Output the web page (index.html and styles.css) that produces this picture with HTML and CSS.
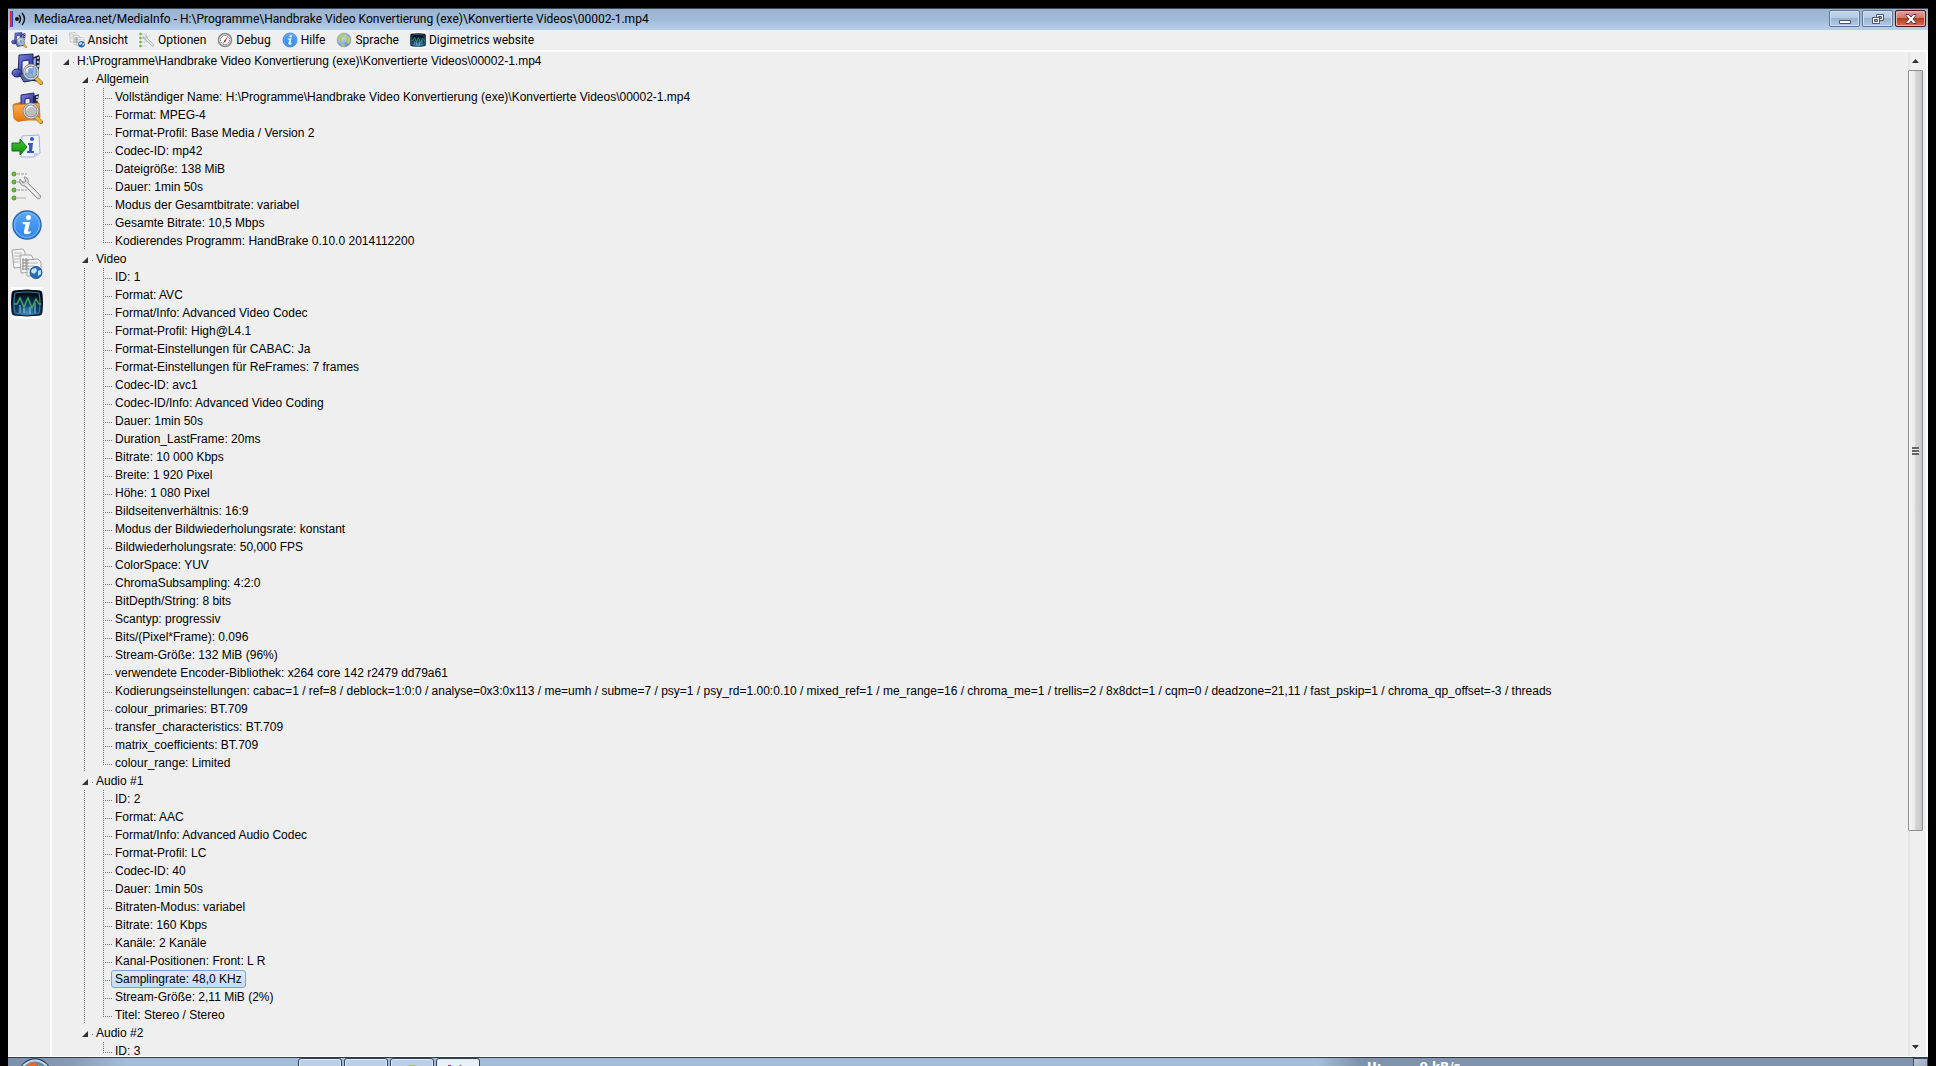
FILE: index.html
```
<!DOCTYPE html>
<html lang="de">
<head>
    <meta charset="UTF-8">
    <meta name="viewport" content="width=device-width, initial-scale=1.0">
    <title>MediaArea.net/MediaInfo</title>
    <link rel="stylesheet" href="styles.css">
</head>
<body>
    <!-- Icons -->
    <svg class="sprite" aria-hidden="true">
        <defs>
            <linearGradient id="g-note" x1="0" y1="0" x2="1" y2="1">
                <stop offset="0" stop-color="#7f86e0"/>
                <stop offset="1" stop-color="#22288f"/>
            </linearGradient>
            <linearGradient id="g-folder" x1="0" y1="0" x2="0" y2="1">
                <stop offset="0" stop-color="#f9b25a"/>
                <stop offset="1" stop-color="#e87a12"/>
            </linearGradient>
            <linearGradient id="g-info" x1="0" y1="0" x2="0" y2="1">
                <stop offset="0" stop-color="#5aa6f5"/>
                <stop offset="1" stop-color="#2f86ee"/>
            </linearGradient>
            <linearGradient id="g-arrow" x1="0" y1="0" x2="0" y2="1">
                <stop offset="0" stop-color="#46c832"/>
                <stop offset="1" stop-color="#0e8a10"/>
            </linearGradient>
            <radialGradient id="g-scope" cx="0.5" cy="0.9" r="0.8">
                <stop offset="0" stop-color="#4a96c4"/>
                <stop offset="0.45" stop-color="#123e63"/>
                <stop offset="1" stop-color="#04080f"/>
            </radialGradient>
            <radialGradient id="g-globe" cx="0.35" cy="0.3" r="0.8">
                <stop offset="0" stop-color="#d4e6fa"/>
                <stop offset="1" stop-color="#5a82bd"/>
            </radialGradient>
        </defs>
        <symbol id="lens" viewBox="0 0 32 32">
            <path d="M25 25l5 5" stroke="#9a7a30" stroke-width="4" stroke-linecap="round"/>
            <path d="M25.500 25.500l4 4" stroke="#f0b63c" stroke-width="3" stroke-linecap="round"/>
            <circle cx="20" cy="19" r="7" fill="#a9cdf2" fill-opacity="0.7" stroke="#83898f" stroke-width="2.400"/>
            <circle cx="20" cy="19" r="7" fill="none" stroke="#dfe4e8" stroke-width="1"/>
            <path d="M15.500 18a5 5 0 0 1 6-3.500" fill="none" stroke="#fff" stroke-width="1.400"/>
        </symbol>
        <symbol id="note" viewBox="0 0 32 32">
            <path d="M20 5l8-3 1 3-2 21 2 3-7-1-3-3z" fill="#1c2740"/>
            <path d="M21 6l4-1-1 20-4-1z" fill="#92b4dc"/>
            <path d="M26 5h2M26 9h2M26 13h2M25 17h2M25 21h2" stroke="#e8eef6" stroke-width="1.500"/>
            <path d="M8 2l14-1v19h-4V7l-7 1v12H7z" fill="url(#g-note)" stroke="#20246e" stroke-width="1"/>
            <ellipse cx="6" cy="20" rx="5" ry="4" fill="url(#g-note)" stroke="#20246e"/>
            <path d="M8 21l13-1 3 7-11 2z" fill="#4a6aa8" stroke="#18233f"/>
        </symbol>
        <symbol id="file" viewBox="0 0 32 32">
            <use href="#note"/>
            <use href="#lens"/>
        </symbol>
        <symbol id="folder" viewBox="0 0 32 32">
            <path d="M2 12l7-2 3 2 15-2 2 16-22 4-4-3z" fill="#d97414"/>
            <path d="M10 3l13-2v15h-4V6l-5 1v10h-4z" fill="url(#g-note)" stroke="#20246e"/>
            <path d="M22 4l6-2-2 12h-4z" fill="#1c2740"/>
            <path d="M25 5h2M25 8h2" stroke="#e8eef6" stroke-width="1.500"/>
            <path d="M2 13l26-2 1 14-3 3H6l-3-2z" fill="url(#g-folder)" stroke="#d87a1c"/>
            <use href="#lens"/>
        </symbol>
        <symbol id="export" viewBox="0 0 32 32">
            <path d="M11 5l17-1 1 18-6 4H10z" fill="#eef3ff" stroke="#a6b3d4"/>
            <path d="M23 26v-4h6z" fill="#c3cfea"/>
            <circle cx="21" cy="8" r="2" fill="#3b55c4"/>
            <path d="M17 12h5l-1 8h2v2h-7v-2h2v-6h-1z" fill="#3b55c4"/>
            <path d="M1 12h8V8l7 8-7 8v-4H1z" fill="url(#g-arrow)" stroke="#0d7410"/>
        </symbol>
        <symbol id="options" viewBox="0 0 32 32">
            <path d="M6 4h10M6 12h10M6 20h10" stroke="#c3c3c3" stroke-width="2" stroke-dasharray="3 1"/>
            <g fill="#6cc43a" stroke="#479a20">
                <circle cx="3" cy="4" r="2"/>
                <circle cx="3" cy="12" r="2"/>
                <circle cx="3" cy="20" r="2"/>
                <circle cx="3" cy="28" r="2"/>
            </g>
            <path d="M6 28h9" stroke="#d0d0d0" stroke-width="2"/>
            <path d="M9 9c-1 4 1 7 5 7l12 12c2 2 5 0 3-3L17 13c1-3-1-6-4-6l2 4-3 2z" fill="#dadada" stroke="#8e8e8e"/>
            <path d="M15 14l12 12" stroke="#f8f8f8" stroke-width="1.500"/>
        </symbol>
        <symbol id="info" viewBox="0 0 32 32">
            <circle cx="16" cy="16" r="14" fill="url(#g-info)" stroke="#2a68b4" stroke-width="1.400"/>
            <circle cx="16" cy="16" r="12.500" fill="none" stroke="#83bcf8"/>
            <circle cx="17.500" cy="8.500" r="2.500" fill="#fff"/>
            <path d="M12 13h7l-2 9c0 1 1 1 3 0l-.5 2c-3 2-7.500 2-6.500-2l1.500-6.500-3-.5z" fill="#fff"/>
        </symbol>
        <symbol id="view" viewBox="0 0 32 32">
            <g fill="#f5f5f5" stroke="#a2a2a2">
                <path d="M1 2l11-1 2 3v15l-11 1z"/>
                <path d="M9 7l11 0 2 3v14l-12 1z"/>
                <path d="M16 12l11-1 3 3v14l-14 0z"/>
            </g>
            <path d="M3 5h8M3 8h8M3 11h5M3 14h5" stroke="#b4b4b4"/>
            <path d="M12 10v12M15 10v12M11 12h7M11 15h7M11 18h7M11 21h7" stroke="#8e8e8e"/>
            <path d="M18 15h9M18 18h5M18 21h3" stroke="#b4b4b4"/>
            <circle cx="25" cy="24.500" r="6" fill="#2a6db8" stroke="#1c4f90"/>
            <path d="M21 21l4-1 1 3-3 3-3-2zM27 23l3-1v4l-3 2z" fill="#c6e2fa"/>
        </symbol>
        <symbol id="scope" viewBox="0 0 32 32">
            <path d="M0 0h32v32H0z" fill="#fff"/>
            <path d="M3 4q13-2 26 0 2 0 2 3 1 9 0 18 0 3-2 3-13 2-26 0-2 0-2-3-1-9 0-18 0-3 2-3z" fill="url(#g-scope)" stroke="#061019"/>
            <path d="M4 6q12-2 24 0 2 10 0 20-12 2-24 0-2-10 0-20z" fill="none" stroke="#2d7fb0" stroke-width="1.200"/>
            <path d="M9 18v8M13 21v5M19 20v7M24 16v10" stroke="#8cc6ea" stroke-opacity="0.500" stroke-width="2"/>
            <path d="M3 17h3l3-6 4 9 4-9 4 10 4-9 3 5h2" fill="none" stroke="#47a868" stroke-width="1.400"/>
        </symbol>
        <symbol id="gauge" viewBox="0 0 32 32">
            <circle cx="16" cy="16" r="13" fill="#f0f0f0" stroke="#8a8a8a" stroke-width="3"/>
            <circle cx="16" cy="16" r="9" fill="#fff" stroke="#555" stroke-width="2" stroke-dasharray="3 2"/>
            <path d="M21 9l-3 9-4 0z" fill="#d03030"/>
            <path d="M12 23l3-6 3 1z" fill="#333"/>
        </symbol>
        <symbol id="globe" viewBox="0 0 32 32">
            <circle cx="16" cy="16" r="14" fill="url(#g-globe)" stroke="#7390b4"/>
            <path d="M5 8q6-7 14-5l-2 6-5 3 1 5-5 3-5-6zM20 10l7 0 3 8-5 6-5-5zM12 23l6 2-1 5-6-2z" fill="#b4c774"/>
        </symbol>
    </svg>

    <div class="window">
        <header class="titlebar">
            <svg class="app-icon" viewBox="0 0 16 16" aria-hidden="true">
                <path d="M0 0h1v16H0z" fill="#e02020"/>
                <path d="M1 0h1v16H1z" fill="#20a040"/>
                <path d="M2 0h1v16H2z" fill="#2040d0"/>
                <circle cx="7" cy="8" r="2" fill="#111"/>
                <path d="M9 4q3 4 0 8M12 2q5 6 0 12" fill="none" stroke="#111" stroke-width="1.400"/>
            </svg>
            <h1>MediaArea.net/MediaInfo - H:\Programme\Handbrake Video Konvertierung (exe)\Konvertierte Videos\00002-1.mp4</h1>
            <div class="controls">
                <button type="button" aria-label="Minimieren">
                    <svg viewBox="0 0 12 12"><path d="M.5 7.500h11v3H.5z" fill="#fff" stroke="#4a5668"/></svg>
                </button>
                <button type="button" aria-label="Verkleinern">
                    <svg viewBox="0 0 12 12">
                        <path d="M4.500 1.500h7v6h-7z" fill="#fff" stroke="#4a5668"/>
                        <path d="M6.500 3.500h3v2h-3z" fill="#9db6d3" stroke="#4a5668"/>
                        <path d="M.5 4.500h7v6h-7z" fill="#fff" stroke="#4a5668"/>
                        <path d="M2.500 6.500h3v2h-3z" fill="#9db6d3" stroke="#4a5668"/>
                    </svg>
                </button>
                <button type="button" class="close" aria-label="Schließen">
                    <svg viewBox="0 0 12 12"><path d="M1 1.500h3l2 2.500 2-2.500h3v1L8 6l3 3.500v1H8L6 8l-2 2.500H1v-1L4 6 1 2.500z" fill="#fff" stroke="#4b3a44"/></svg>
                </button>
            </div>
        </header>

        <nav class="menubar">
            <button type="button"><svg><use href="#file"/></svg>Datei</button>
            <button type="button"><svg><use href="#view"/></svg>Ansicht</button>
            <button type="button"><svg><use href="#options"/></svg>Optionen</button>
            <button type="button"><svg><use href="#gauge"/></svg>Debug</button>
            <button type="button"><svg><use href="#info"/></svg>Hilfe</button>
            <button type="button"><svg><use href="#globe"/></svg>Sprache</button>
            <button type="button"><svg><use href="#scope"/></svg>Digimetrics website</button>
        </nav>

        <div class="content">
            <div class="toolbar">
                <button type="button" aria-label="Datei öffnen"><svg><use href="#file"/></svg></button>
                <button type="button" aria-label="Ordner öffnen"><svg><use href="#folder"/></svg></button>
                <button type="button" aria-label="Exportieren"><svg><use href="#export"/></svg></button>
                <button type="button" aria-label="Optionen"><svg><use href="#options"/></svg></button>
                <button type="button" aria-label="Info"><svg><use href="#info"/></svg></button>
                <button type="button" aria-label="Ansicht"><svg><use href="#view"/></svg></button>
                <button type="button" aria-label="Digimetrics website"><svg><use href="#scope"/></svg></button>
            </div>

            <main class="tree">
                <details open>
                    <summary>H:\Programme\Handbrake Video Konvertierung (exe)\Konvertierte Videos\00002-1.mp4</summary>
                    <div class="groups">
                        <details open>
                            <summary>Allgemein</summary>
                            <ul>
                                <li>Vollständiger Name: H:\Programme\Handbrake Video Konvertierung (exe)\Konvertierte Videos\00002-1.mp4</li>
                                <li>Format: MPEG-4</li>
                                <li>Format-Profil: Base Media / Version 2</li>
                                <li>Codec-ID: mp42</li>
                                <li>Dateigröße: 138 MiB</li>
                                <li>Dauer: 1min 50s</li>
                                <li>Modus der Gesamtbitrate: variabel</li>
                                <li>Gesamte Bitrate: 10,5 Mbps</li>
                                <li>Kodierendes Programm: HandBrake 0.10.0 2014112200</li>
                            </ul>
                        </details>
                        <details open>
                            <summary>Video</summary>
                            <ul>
                                <li>ID: 1</li>
                                <li>Format: AVC</li>
                                <li>Format/Info: Advanced Video Codec</li>
                                <li>Format-Profil: High@L4.1</li>
                                <li>Format-Einstellungen für CABAC: Ja</li>
                                <li>Format-Einstellungen für ReFrames: 7 frames</li>
                                <li>Codec-ID: avc1</li>
                                <li>Codec-ID/Info: Advanced Video Coding</li>
                                <li>Dauer: 1min 50s</li>
                                <li>Duration_LastFrame: 20ms</li>
                                <li>Bitrate: 10 000 Kbps</li>
                                <li>Breite: 1 920 Pixel</li>
                                <li>Höhe: 1 080 Pixel</li>
                                <li>Bildseitenverhältnis: 16:9</li>
                                <li>Modus der Bildwiederholungsrate: konstant</li>
                                <li>Bildwiederholungsrate: 50,000 FPS</li>
                                <li>ColorSpace: YUV</li>
                                <li>ChromaSubsampling: 4:2:0</li>
                                <li>BitDepth/String: 8 bits</li>
                                <li>Scantyp: progressiv</li>
                                <li>Bits/(Pixel*Frame): 0.096</li>
                                <li>Stream-Größe: 132 MiB (96%)</li>
                                <li>verwendete Encoder-Bibliothek: x264 core 142 r2479 dd79a61</li>
                                <li>Kodierungseinstellungen: cabac=1 / ref=8 / deblock=1:0:0 / analyse=0x3:0x113 / me=umh / subme=7 / psy=1 / psy_rd=1.00:0.10 / mixed_ref=1 / me_range=16 / chroma_me=1 / trellis=2 / 8x8dct=1 / cqm=0 / deadzone=21,11 / fast_pskip=1 / chroma_qp_offset=-3 / threads</li>
                                <li>colour_primaries: BT.709</li>
                                <li>transfer_characteristics: BT.709</li>
                                <li>matrix_coefficients: BT.709</li>
                                <li>colour_range: Limited</li>
                            </ul>
                        </details>
                        <details open>
                            <summary>Audio #1</summary>
                            <ul>
                                <li>ID: 2</li>
                                <li>Format: AAC</li>
                                <li>Format/Info: Advanced Audio Codec</li>
                                <li>Format-Profil: LC</li>
                                <li>Codec-ID: 40</li>
                                <li>Dauer: 1min 50s</li>
                                <li>Bitraten-Modus: variabel</li>
                                <li>Bitrate: 160 Kbps</li>
                                <li>Kanäle: 2 Kanäle</li>
                                <li>Kanal-Positionen: Front: L R</li>
                                <li><span class="selected">Samplingrate: 48,0 KHz</span></li>
                                <li>Stream-Größe: 2,11 MiB (2%)</li>
                                <li>Titel: Stereo / Stereo</li>
                            </ul>
                        </details>
                        <details open>
                            <summary>Audio #2</summary>
                            <ul>
                                <li>ID: 3</li>
                            </ul>
                        </details>
                    </div>
                </details>
            </main>

            <div class="scrollbar">
                <button type="button" class="up" aria-label="Nach oben"></button>
                <div class="track">
                    <div class="thumb"></div>
                </div>
                <button type="button" class="down" aria-label="Nach unten"></button>
            </div>
        </div>
    </div>

    <!-- Taskbar -->
    <footer class="taskbar">
        <svg class="orb" viewBox="0 0 34 34" aria-hidden="true">
            <circle cx="17" cy="17" r="16" fill="#5d86ad" stroke="#27425f" stroke-width="1.400"/>
            <path d="M5 8q12-11 24 0" fill="none" stroke="#c6dbec" stroke-width="2"/>
            <path d="M9 7q5-5 10-1l-2 9H8z" fill="#e8672a"/>
            <path d="M20 7q4 2 8 0l-2 9h-8z" fill="#93c33c"/>
        </svg>
        <div class="tasks">
            <button type="button" aria-label="Explorer"></button>
            <button type="button" aria-label="Browser"></button>
            <button type="button" aria-label="Editor"><svg viewBox="0 0 24 24"><circle cx="12" cy="12" r="11" fill="#9cc31c"/></svg></button>
            <button type="button" class="active" aria-label="MediaInfo"><svg viewBox="0 0 24 24"><path d="M2 1h1v22H2z" fill="#e02020"/><path d="M3 1h1v22H3z" fill="#20a040"/><path d="M4 1h1v22H4z" fill="#2040d0"/><path d="M14 1q8 11 0 22" fill="none" stroke="#888" stroke-width="2"/></svg></button>
        </div>
        <div class="net"><span>U:</span><span>0 kB/s</span></div>
        <button type="button" class="show-desktop" aria-label="Desktop anzeigen"></button>
    </footer>
</body>
</html>
```

FILE: styles.css
```
* {
    box-sizing: border-box;
}

body {
    margin: 0;
    padding: 8px 8px 0;
    height: 100vh;
    overflow: hidden;
    display: flex;
    flex-direction: column;
    background: #000;
    color: #000;
    font-family: "Liberation Sans", Arial, sans-serif;
    font-size: 12px;
}

button {
    margin: 0;
    padding: 0;
    border: none;
    background: none;
    color: inherit;
    font: inherit;
}

.sprite {
    position: absolute;
    width: 0;
    height: 0;
}

.window {
    flex: 1;
    min-height: 0;
    display: flex;
    flex-direction: column;
    background: #efefef;
}

/* Title bar */
.titlebar {
    display: flex;
    align-items: center;
    height: 22px;
    padding: 0 2px 2px;
    border-top: 1px solid #3c4650;
    background: linear-gradient(#9ab3d0, #a0bad8 50%, #b8cfe9);
}

.app-icon {
    width: 16px;
    height: 16px;
    margin-right: 8px;
}

.titlebar h1 {
    flex: 1;
    margin: 0;
    font-family: Roboto, sans-serif;
    font-size: 12px;
    font-weight: normal;
    white-space: nowrap;
}

.controls {
    display: flex;
    gap: 2px;
}

.controls button {
    display: flex;
    align-items: center;
    justify-content: center;
    width: 31px;
    height: 17px;
    border: 1px solid #5f7593;
    border-radius: 2px;
    background: linear-gradient(#c3d5ea, #b4cae3 45%, #9ab3d0 50%, #b1c9e4);
    box-shadow: inset 0 0 0 1px #d3e0ef;
}

.controls svg {
    width: 12px;
    height: 12px;
}

.controls .close {
    border-color: #4d1420;
    background: linear-gradient(#e3a096, #d47a6b 45%, #b93a22 50%, #d2705a);
    box-shadow: inset 0 0 0 1px #e5b1a8;
}

/* Menu bar */
.menubar {
    display: flex;
    gap: 11px;
    height: 20px;
    padding-left: 3px;
    font-family: Roboto, sans-serif;
}

.menubar button {
    display: flex;
    align-items: center;
    gap: 3px;
    white-space: nowrap;
}

.menubar svg {
    width: 16px;
    height: 16px;
}

.content {
    flex: 1;
    min-height: 0;
    display: flex;
    border-top: 2px solid #fff;
    border-bottom: 1px solid #fff;
}

.toolbar {
    display: flex;
    flex-direction: column;
    gap: 7px;
    width: 44px;
    padding: 1px 0 0 3px;
    border-right: 2px solid #fff;
}

.toolbar button,
.toolbar svg {
    display: block;
    width: 32px;
    height: 32px;
}

/* Tree */
.tree {
    flex: 1;
    min-width: 0;
    overflow: hidden;
    padding-left: 11px;
    line-height: 18px;
    white-space: nowrap;
}

.tree summary {
    display: flex;
    align-items: center;
    height: 18px;
    list-style: none;
}

/* caret */
.tree summary::before {
    content: "";
    order: -2;
    width: 6px;
    height: 6px;
    margin: 2px 4px 0 0;
    background: #333;
    clip-path: polygon(100% 0, 100% 100%, 0 100%);
}

/* connector dot */
.tree summary::after {
    content: "";
    order: -1;
    width: 1px;
    height: 1px;
    margin: 2px 3px 0 0;
    background: #888;
}

.groups {
    padding-left: 19px;
}

.tree ul {
    margin: 0;
    padding: 0 0 0 21px;
    list-style: none;
    background: repeating-linear-gradient(#707070 0 1px, transparent 1px 2px) 2px 0 / 1px 100% no-repeat;
}

.groups details:last-child ul {
    background: none;
}

.tree li {
    height: 18px;
    padding-left: 12px;
    background:
        repeating-linear-gradient(#707070 0 1px, transparent 1px 2px) 0 0 / 1px 100% no-repeat,
        repeating-linear-gradient(90deg, #707070 0 1px, transparent 1px 2px) 0 10px / 9px 1px no-repeat;
}

.tree li:last-child {
    background-size: 1px 10px, 9px 1px;
}

.selected {
    display: inline-block;
    height: 18px;
    margin-left: -4px;
    padding: 0 3px;
    border: 1px solid #7da2ce;
    border-radius: 3px;
    background: linear-gradient(#dcebfc, #c1dbfc);
    line-height: 16px;
}

/* Scrollbar */
.scrollbar {
    display: flex;
    flex-direction: column;
    width: 20px;
    border-right: 2px solid #fff;
    padding-right: 3px;
    background: linear-gradient(90deg, #e3e3e3, #f0f0f0 20%, #f0f0f0);
}

.scrollbar button {
    display: flex;
    align-items: center;
    justify-content: center;
    height: 18px;
}

.scrollbar button::before {
    content: "";
    width: 7px;
    height: 4px;
    background: #333;
    clip-path: polygon(50% 0, 100% 100%, 0 100%);
}

.scrollbar .down::before {
    clip-path: polygon(0 0, 100% 0, 50% 100%);
}

.track {
    flex: 1;
    display: flex;
    flex-direction: column;
}

.thumb {
    flex: 11;
    display: flex;
    align-items: center;
    justify-content: center;
    border: 1px solid #8f8f8f;
    border-radius: 1px;
    background: linear-gradient(90deg, #f6f6f6, #e9e9eb 45%, #d6d6d9 50%, #c6c6ca);
}

.track::after {
    content: "";
    flex: 3;
}

.thumb::before {
    content: "";
    width: 7px;
    height: 8px;
    background: repeating-linear-gradient(#666 0 2px, #eee 2px 3px);
}

/* Taskbar */
.taskbar {
    display: flex;
    align-items: flex-start;
    height: 9px;
    overflow: hidden;
    padding-left: 10px;
    border-top: 1px solid #2f3b49;
    background: linear-gradient(90deg, #7c90ab 0, #8799b3 60px, #a4bddc 120px, #a4bddc 1310px, #8093ac 1350px);
}

.orb {
    flex: none;
    width: 34px;
    height: 34px;
}

.tasks {
    flex: none;
    display: flex;
    gap: 2px;
    margin-left: 246px;
}

.tasks button {
    display: flex;
    justify-content: center;
    width: 44px;
    height: 38px;
    padding-top: 5px;
    border: 1px solid #2f4057;
    border-radius: 3px;
    background: #bccfe6;
    box-shadow: inset 0 0 0 1px #e2ecf7;
}

.tasks svg {
    width: 24px;
    height: 24px;
}

.tasks .active {
    background: #e9f0f8;
}

.net {
    flex: 1;
    display: flex;
    gap: 38px;
    padding: 2px 0 0 887px;
    color: #fff;
    font-family: "DejaVu Sans", sans-serif;
    font-size: 12px;
    font-weight: bold;
    line-height: 14px;
    white-space: nowrap;
}

.show-desktop {
    width: 15px;
    height: 38px;
    border: 1px solid #3b4a5e;
    background: linear-gradient(135deg, #b9c5d3, #71839a);
}
```
